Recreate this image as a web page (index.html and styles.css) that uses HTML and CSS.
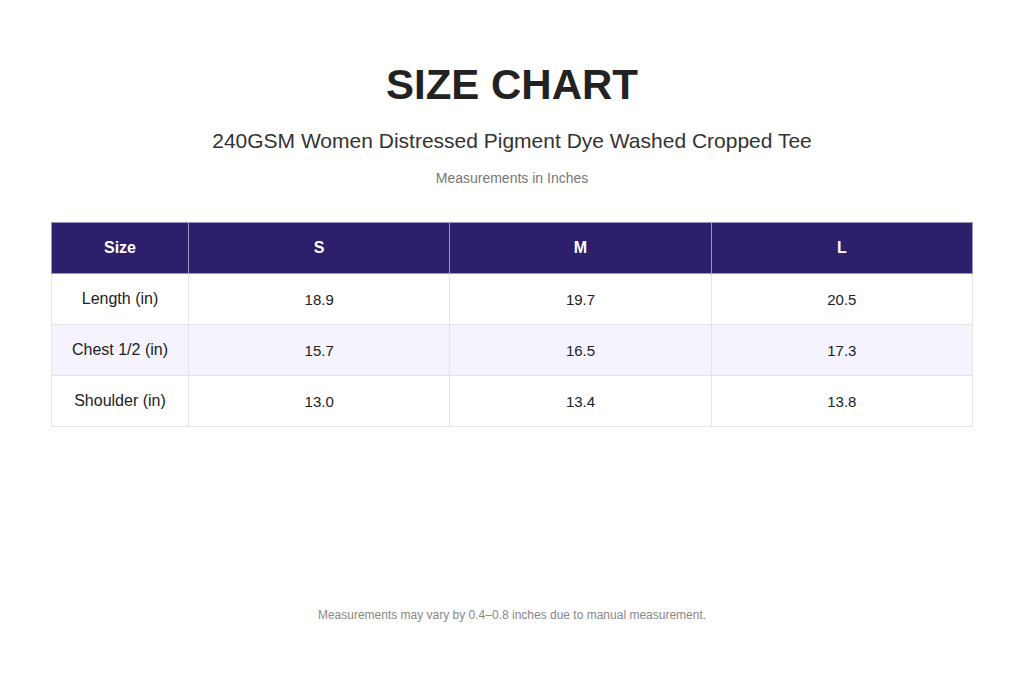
FILE: index.html
```html
<!DOCTYPE html>
<html>
<head>
<meta charset="utf-8">
<link rel="stylesheet" href="styles.css">
</head>
<body>
<div class="page">
  <h1 class="title">SIZE CHART</h1>
  <h2 class="subtitle">240GSM Women Distressed Pigment Dye Washed Cropped Tee</h2>
  <p class="unit">Measurements in Inches</p>
  <table class="chart">
    <thead>
      <tr><th class="first">Size</th><th>S</th><th>M</th><th>L</th></tr>
    </thead>
    <tbody>
      <tr><td class="label">Length (in)</td><td>18.9</td><td>19.7</td><td>20.5</td></tr>
      <tr class="alt"><td class="label">Chest 1/2 (in)</td><td>15.7</td><td>16.5</td><td>17.3</td></tr>
      <tr><td class="label">Shoulder (in)</td><td>13.0</td><td>13.4</td><td>13.8</td></tr>
    </tbody>
  </table>
  <p class="note">Measurements may vary by 0.4–0.8 inches due to manual measurement.</p>
</div>
</body>
</html>
```
FILE: styles.css
```css
html, body {
  margin: 0;
  padding: 0;
  background: #ffffff;
  font-family: "Liberation Sans", Arial, sans-serif;
}
.page {
  width: 1024px;
  height: 694px;
  box-sizing: border-box;
  padding: 61px 51px 0;
  display: flex;
  flex-direction: column;
  align-items: center;
}
.title {
  margin: 0;
  font-size: 42px;
  line-height: 48px;
  font-weight: bold;
  color: #222222;
}
.subtitle {
  margin: 20px 0 0;
  font-size: 21px;
  line-height: 24px;
  font-weight: normal;
  color: #333333;
}
.unit {
  margin: 17px 0 0;
  font-size: 14px;
  line-height: 16px;
  color: #777777;
}
.chart {
  margin-top: 36px;
  width: 922px;
  border-collapse: collapse;
  table-layout: fixed;
}
.chart th,
.chart td {
  height: 51px;
  padding: 0;
  text-align: center;
  vertical-align: middle;
  box-sizing: border-box;
}
.chart th {
  background: #2e1f6d;
  color: #ffffff;
  font-size: 16px;
  font-weight: bold;
  border: 1px solid #9c95c6;
}
.chart th.first {
  width: 137px;
}
.chart td {
  border: 1px solid #e4e4e4;
  font-size: 15px;
  color: #222222;
}
.chart td.label {
  font-size: 16px;
}
.chart tr.alt td {
  background: #f5f3fd;
}
.note {
  margin: 181px 0 0;
  font-size: 12px;
  line-height: 14px;
  color: #888888;
}
```
